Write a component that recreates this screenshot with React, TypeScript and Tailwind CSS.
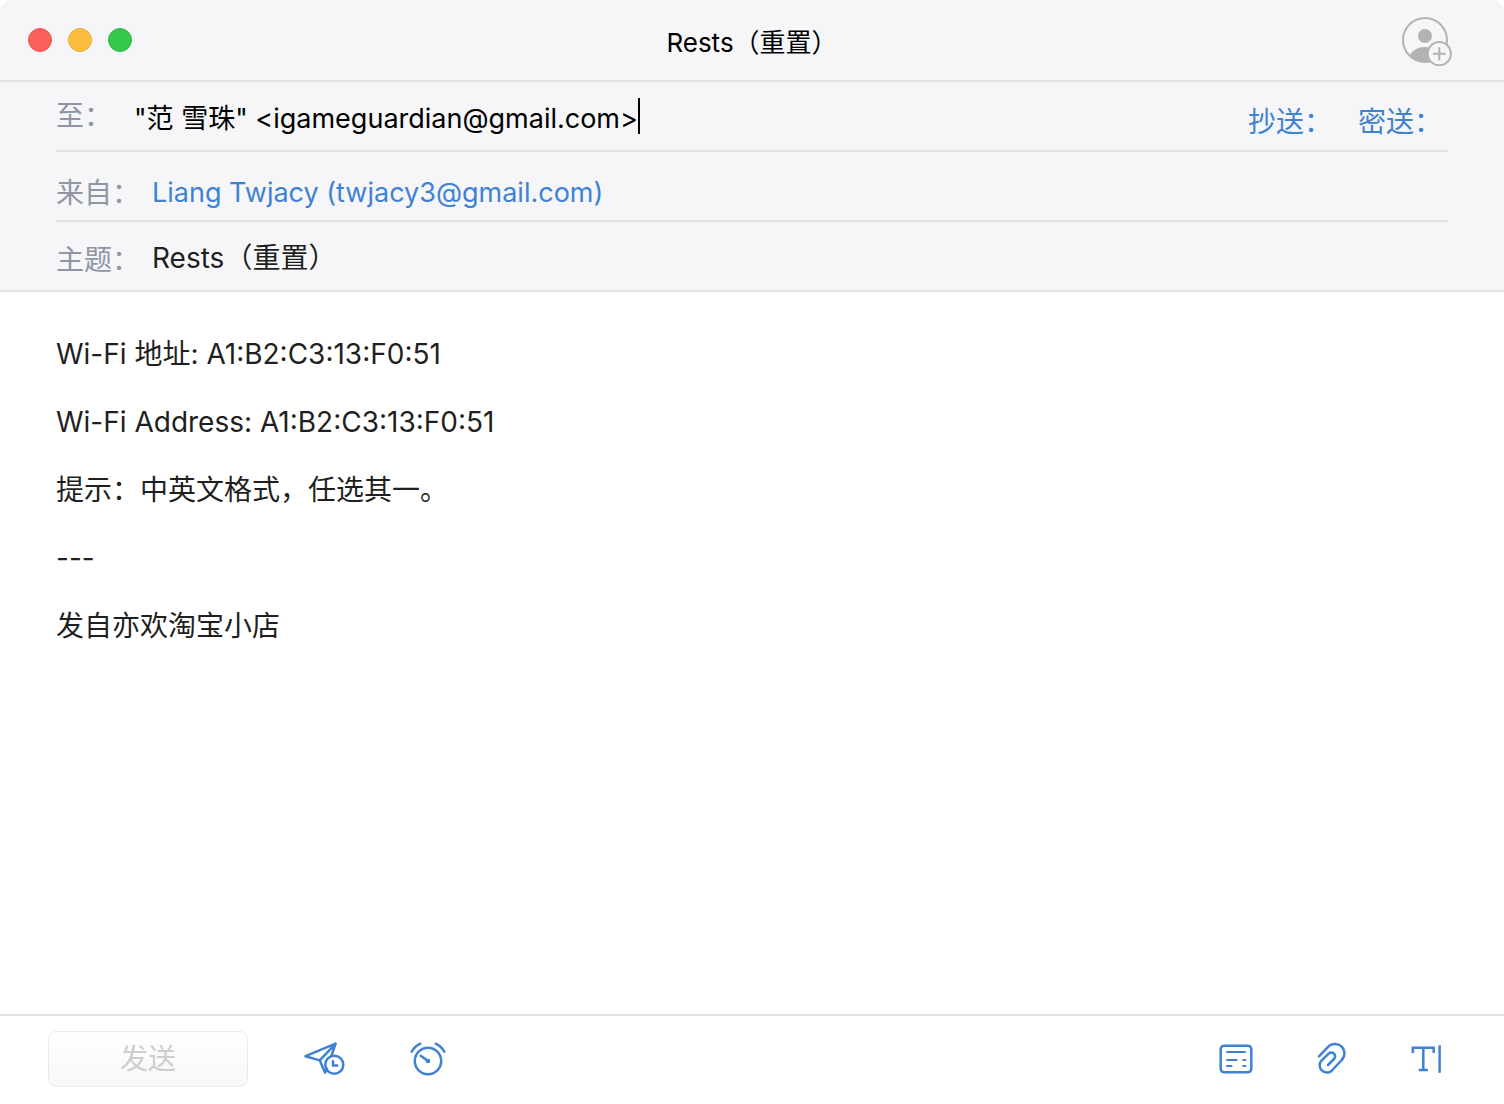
import type { ReactNode } from "react";

const MESSAGE = [
  "Wi-Fi 地址: A1:B2:C3:13:F0:51",
  "Wi-Fi Address: A1:B2:C3:13:F0:51",
  "提示：中英文格式，任选其一。",
  "---",
  "发自亦欢淘宝小店",
].join("\n\n");

function ToolButton({ label, children }: { label: string; children: ReactNode }) {
  return (
    <button type="button" aria-label={label} className="size-12 shrink-0 text-[#3f82d2]">
      <svg
        viewBox="0 -1 48 48"
        className="size-12"
        fill="none"
        stroke="currentColor"
        strokeWidth="2.5"
        strokeLinecap="round"
        strokeLinejoin="round"
        aria-hidden="true"
      >
        {children}
      </svg>
    </button>
  );
}

function TitleBar() {
  return (
    <header className="grid h-[82px] grid-cols-[1fr_auto_1fr] items-center border-b-2 border-[#e3e3e5]">
      <div className="flex gap-4 pl-7">
        <button type="button" aria-label="关闭" className="size-6 rounded-full border border-[#ee5452] bg-[#fc605c]" />
        <button type="button" aria-label="最小化" className="size-6 rounded-full border border-[#efae3d] bg-[#fdbc40]" />
        <button type="button" aria-label="缩放" className="size-6 rounded-full border border-[#2fb745] bg-[#36c84b]" />
      </div>
      <h1 className="pt-[6px] text-[26px] leading-8 text-black">Rests（重置）</h1>
      <button type="button" aria-label="添加联系人" className="mr-[51px] size-[52px] justify-self-end">
        <svg viewBox="0 -1 52 52" className="size-[52px]" fill="none" aria-hidden="true">
          <defs>
            <clipPath id="avatar">
              <circle cx="24" cy="25" r="22" />
            </clipPath>
          </defs>
          <circle cx="24" cy="25" r="22" stroke="#b3b3b4" strokeWidth="2" />
          <circle cx="24" cy="21" r="7" fill="#b3b3b4" />
          <path d="M8 42C11 35 17 32 24 32s13 3 16 10v8H8z" fill="#b3b3b4" clipPath="url(#avatar)" />
          <circle cx="38.3" cy="38.7" r="11.6" fill="#f6f6f8" stroke="#b3b3b4" strokeWidth="2" />
          <path d="M31.8 38.7h13M38.3 32.2v13" stroke="#b3b3b4" strokeWidth="2" />
        </svg>
      </button>
    </header>
  );
}

export default function App() {
  return (
    <main
      lang="zh-CN"
      className="flex min-h-screen flex-col overflow-hidden bg-white font-['Inter','Noto_Sans_CJK_SC',sans-serif] text-[28px] leading-[34px] text-[#1f1f21]"
    >
      <div className="rounded-t-xl border-b-2 border-[#e3e3e5] bg-[#f6f6f8]">
        <TitleBar />
        <div className="px-14">
          <div className="flex h-[70px] items-center border-b-2 border-[#e3e3e5]">
            <label htmlFor="to" className="w-[78px] shrink-0 text-[#8e96a6]">至：</label>
            <input
              id="to"
              type="text"
              defaultValue={'"范 雪珠" <igameguardian@gmail.com>'}
              className="h-9 [field-sizing:content] bg-transparent text-[27px] text-black outline-none"
            />
            <span className="h-9 w-[2px] shrink-0 bg-black" aria-hidden="true" />
            <div className="ml-auto flex shrink-0 gap-[26px] pt-3 pr-[6px] text-[#3f82d2]">
              <button type="button">抄送：</button>
              <button type="button">密送：</button>
            </div>
          </div>
          <div className="flex h-[70px] items-center gap-3 border-b-2 border-[#e3e3e5] pt-[14px]">
            <span className="w-[84px] shrink-0 text-[#8e96a6]">来自：</span>
            <button type="button" className="text-[27px] text-[#3f82d2]">Liang Twjacy (twjacy3@gmail.com)</button>
          </div>
          <div className="flex h-[68px] items-center gap-3">
            <label htmlFor="subject" className="w-[84px] shrink-0 pt-2 text-[#8e96a6]">主题：</label>
            <input
              id="subject"
              type="text"
              defaultValue="Rests（重置）"
              className="h-9 min-w-0 flex-1 bg-transparent outline-none"
            />
          </div>
        </div>
      </div>

      <textarea
        aria-label="正文"
        defaultValue={MESSAGE}
        className="block flex-1 resize-none bg-white px-14 pt-[45px] outline-none"
      />

      <footer className="flex h-[90px] items-start border-t-2 border-[#e3e3e5] pt-[15px] pr-[53px] pl-12">
        <button
          type="button"
          disabled
          className="h-14 w-[200px] shrink-0 rounded-lg border border-[#ebebeb] bg-linear-to-b from-white to-[#f7f7f7] text-[#cdcdcd]"
        >
          发送
        </button>
        <div className="ml-[52px] flex gap-14 pt-1">
          <ToolButton label="稍后发送">
            <path d="M31.5 19.5 35.6 7.6 5.5 20.2l14.3 4.2 5.2 12.2 2-4M19.8 24.4 35.6 7.6" />
            <circle cx="34.3" cy="28.7" r="9" />
            <path d="M33 25.3v4.2h4.3" />
          </ToolButton>
          <ToolButton label="提醒">
            <circle cx="24" cy="25" r="13.2" />
            <path d="M16.7 19.7 24 25M7.7 15.7Q11 10 16.3 7.7M31.7 7.7Q37 10 40.3 15.7" />
            <circle cx="24" cy="25" r="1" fill="currentColor" />
          </ToolButton>
        </div>
        <div className="ml-auto flex gap-12 pt-1">
          <ToolButton label="模板">
            <rect x="9.7" y="9.7" width="30.6" height="26.6" rx="3.5" />
            <path d="M16 16h18M16 24h9.5M32.3 24h2M16 30h4.5M32.3 30h2" strokeWidth="2.2" />
          </ToolButton>
          <ToolButton label="附件">
            <path d="M12 20.3 21.3 10.7A9.4 9.4 0 0 1 34.7 24L24.5 35A7.3 7.3 0 0 1 14.2 24.8L21.7 17.7A3.7 3.7 0 0 1 27 23L21 29" />
          </ToolButton>
          <ToolButton label="文字格式">
            <path d="M9.8 17v-5.2h20.9V17M20.3 11.7V34M15.7 34h9.2M36.6 9.3v27.4" strokeLinejoin="miter" strokeLinecap="butt" />
          </ToolButton>
        </div>
      </footer>
    </main>
  );
}
